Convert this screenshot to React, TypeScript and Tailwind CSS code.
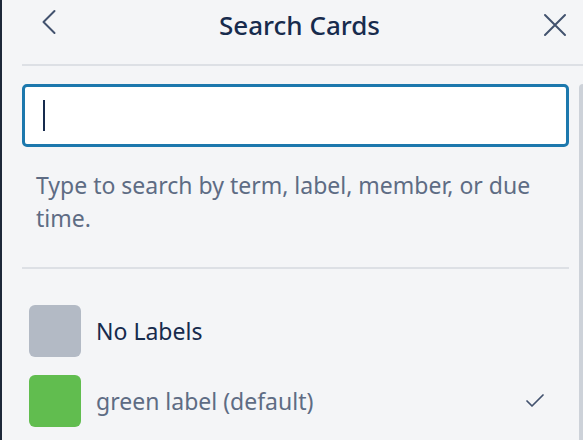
import { Check } from 'lucide-react';

const labels = [
  { name: 'No Labels', color: 'bg-[#b3bac5]', text: 'text-[#172b4d]', checked: false },
  { name: 'green label (default)', color: 'bg-[#61bd4f]', text: 'text-[#5e6c84]', checked: true },
];

export default function App() {
  return (
    <div className="relative w-[583px] h-[440px] overflow-hidden bg-[#f4f5f7] border-l-2 border-[#1d2839] font-['Noto_Sans',sans-serif]">
      {/* scrollbar thumb */}
      <div className="absolute right-0 top-[84px] bottom-0 w-[4px] rounded-tl-sm bg-[#cdd2d9]"></div>

      <div className="pl-[20px]">
        {/* Header */}
        <div className="h-[66px] pb-[15px] flex items-center justify-between pl-[20px] pr-[16px] border-b-2 border-[#dde0e5]">
          <svg width="14" height="26" viewBox="0 0 14 26" className="-translate-y-[3px]" fill="none" stroke="#42526e" strokeWidth="2" strokeLinecap="round" strokeLinejoin="round">
            <polyline points="12.5,2 1.5,13 12.5,24" />
          </svg>
          <h1 className="text-[26px] leading-[32px] text-[#172b4d] font-medium">Search Cards</h1>
          <svg width="24" height="24" viewBox="0 0 24 24" fill="none" stroke="#42526e" strokeWidth="2" strokeLinecap="round">
            <path d="M2 2 L22 22 M22 2 L2 22" />
          </svg>
        </div>

        <div className="pr-[14px]">
          {/* Search input */}
          <div className="mt-[18px] h-[63px] bg-white border-[3px] border-[#1c78ad] rounded-[5px] flex items-center pl-[18px]">
            <div className="w-[2px] h-[31px] bg-[#172b4d]"></div>
          </div>

          <p className="mt-[22px] pl-[14px] text-[23px] leading-[33px] text-[#5e6c84]">
            Type to search by term, label, member, or due time.
          </p>

          <div className="mt-[32px] h-[2px] bg-[#dde0e5]"></div>

          {/* Labels */}
          <ul className="mt-[36px] pl-[7px] flex flex-col gap-[18px]">
            {labels.map((l) => (
              <li key={l.name} className="flex items-center h-[52px]">
                <span className={`w-[52px] h-[52px] rounded-[6px] ${l.color}`}></span>
                <span className={`ml-[15px] flex-1 text-[23px] ${l.text}`}>{l.name}</span>
                {l.checked && <Check className="w-[24px] h-[24px] mr-[22px] text-[#42526e]" strokeWidth={1.75} />}
              </li>
            ))}
          </ul>
        </div>
      </div>
    </div>
  );
}
